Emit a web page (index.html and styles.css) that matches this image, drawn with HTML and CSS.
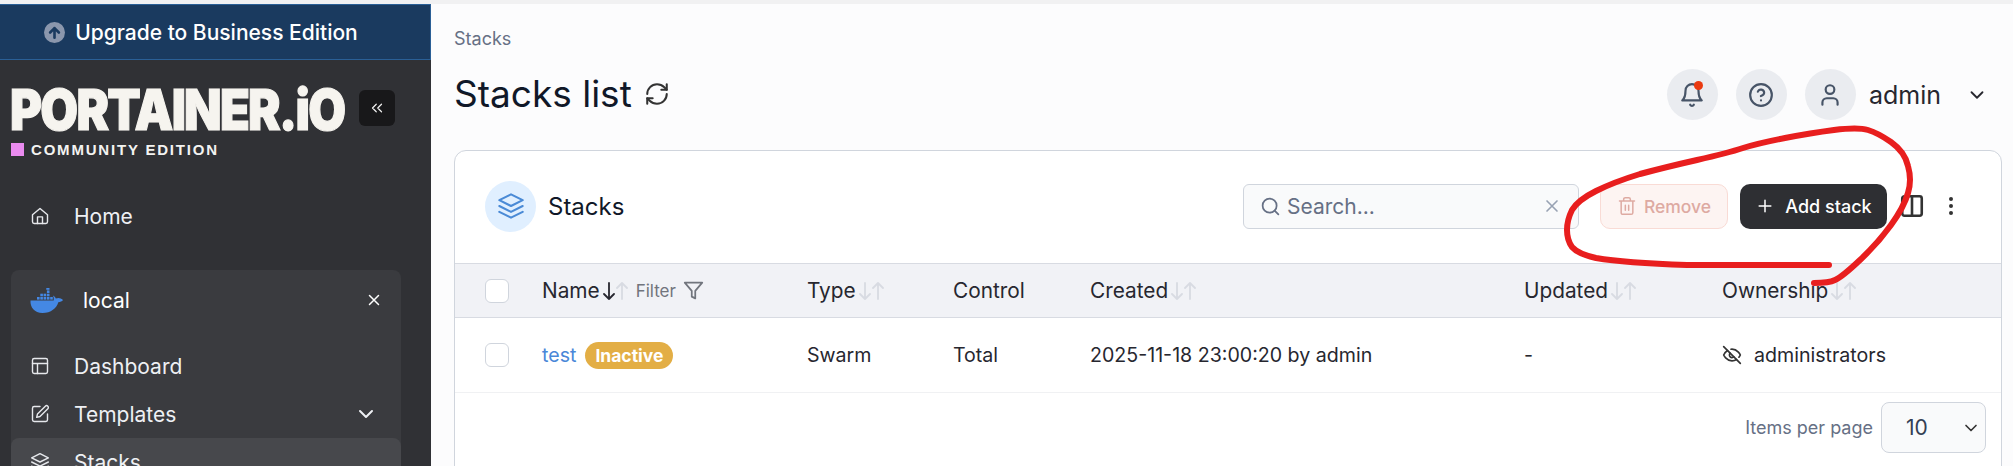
FILE: index.html
```html
<!DOCTYPE html>
<html lang="en">
<head>
<meta charset="utf-8">
<title>Stacks list</title>
<link rel="stylesheet" href="styles.css">
</head>
<body>
<div class="app">
  <aside class="sidebar">
    <a class="upgrade">
      <svg class="upgrade-icon" viewBox="0 0 24 24"><circle class="up-disc" cx="12" cy="12" r="12"/><path class="up-arrow" d="M12 18V7M7 12l5-5 5 5"/></svg>
      <span>Upgrade to Business Edition</span>
    </a>
    <div class="brand">
      <div class="brand-text">
        <div class="logo"><span class="logo-word">PORTAINER.iO</span></div>
        <div class="edition"><span class="edition-mark"></span>COMMUNITY EDITION</div>
      </div>
      <button class="collapse"><svg class="ic ic-collapse" viewBox="0 0 24 24"><path d="m11 17-5-5 5-5M18 17l-5-5 5-5"/></svg></button>
    </div>
    <nav class="nav-top">
      <a class="nav-item"><svg class="ic nav-ic" viewBox="0 0 24 24"><path d="M3 10.5 12 3l9 7.5V19a2 2 0 0 1-2 2H5a2 2 0 0 1-2-2z"/><path d="M9 21v-8h6v8"/></svg><span>Home</span></a>
    </nav>
    <section class="env">
      <div class="env-head">
        <svg class="whale" viewBox="0 0 34 25"><g class="whale-boxes"><rect x="7" y="9" width="2.6" height="2.6"/><rect x="10.3" y="9" width="2.6" height="2.6"/><rect x="13.6" y="9" width="2.6" height="2.6"/><rect x="16.9" y="9" width="2.6" height="2.6"/><rect x="20.2" y="9" width="2.6" height="2.6"/><rect x="10.3" y="5.7" width="2.6" height="2.6"/><rect x="13.6" y="5.7" width="2.6" height="2.6"/><rect x="16.9" y="5.7" width="2.6" height="2.6"/><rect x="16.9" y="2.4" width="2.6" height="2.6"/><rect x="16.3" y="0" width="3.2" height="1.8"/></g><path class="whale-body" d="M0.5 12.4h23.2c.3-2 .1-3.6-.9-5 1.5.6 2.6 1.6 3 3.2 1.5-.7 3.4-.9 5 0 .9.4 1.8.9 2.2 1.4-.9 1.4-2.8 2.2-4.7 2.2C26.600 20 21 25 12.500 25 4.500 25 0 19 .5 12.400z"/></svg>
        <span class="env-name">local</span>
        <svg class="ic env-x" viewBox="0 0 24 24"><path d="M18 6 6 18M6 6l12 12"/></svg>
      </div>
      <a class="nav-item"><svg class="ic nav-ic" viewBox="0 0 24 24"><rect x="3" y="3" width="18" height="18" rx="2"/><path d="M3 9h18M9 21V9"/></svg><span>Dashboard</span></a>
      <a class="nav-item"><svg class="ic nav-ic" viewBox="0 0 24 24"><path d="M12 3H5a2 2 0 0 0-2 2v14a2 2 0 0 0 2 2h14a2 2 0 0 0 2-2v-7"/><path d="M18.400 2.600a2.120 2.120 0 1 1 3 3L12 15l-4 1 1-4z"/></svg><span class="grow">Templates</span><svg class="ic nav-chev" viewBox="0 0 24 24"><path d="m6 9 6 6 6-6"/></svg></a>
      <a class="nav-item active"><svg class="ic nav-ic" viewBox="0 0 24 24"><path d="m12 2 10 5-10 5L2 7z"/><path d="m2 12 10 5 10-5M2 17l10 5 10-5"/></svg><span>Stacks</span></a>
    </section>
  </aside>

  <main class="main">
    <header class="topbar">
      <div class="titles">
        <div class="crumb">Stacks</div>
        <div class="title-row">
          <h1>Stacks list</h1>
          <svg class="ic refresh" viewBox="0 0 24 24"><path d="M3 12a9 9 0 0 1 9-9 9.750 9.750 0 0 1 6.740 2.740L21 8"/><path d="M21 3v5h-5"/><path d="M21 12a9 9 0 0 1-9 9 9.750 9.750 0 0 1-6.740-2.740L3 16"/><path d="M8 16H3v5"/></svg>
        </div>
      </div>
      <div class="user-area">
        <span class="disc bell-disc">
          <svg class="ic disc-ic" viewBox="0 0 24 24"><path d="M6 8a6 6 0 0 1 12 0c0 7 3 9 3 9H3s3-2 3-9"/><path d="M10.300 21a1.940 1.940 0 0 0 3.400 0"/></svg>
          <span class="dot"></span>
        </span>
        <span class="disc"><svg class="ic disc-ic" viewBox="0 0 24 24"><circle cx="12" cy="12" r="10"/><path d="M9.090 9a3 3 0 0 1 5.830 1c0 2-3 3-3 3M12 17h.01"/></svg></span>
        <span class="disc"><svg class="ic disc-ic" viewBox="0 0 24 24"><path d="M19 21v-2a4 4 0 0 0-4-4H9a4 4 0 0 0-4 4v2"/><circle cx="12" cy="7" r="4"/></svg></span>
        <span class="user-name">admin</span>
        <svg class="ic user-chev" viewBox="0 0 24 24"><path d="m6 9 6 6 6-6"/></svg>
      </div>
    </header>

    <section class="card">
      <div class="card-head">
        <span class="card-disc"><svg class="ic card-ic" viewBox="0 0 24 24"><path d="m12 2 10 5-10 5L2 7z"/><path d="m2 12 10 5 10-5M2 17l10 5 10-5"/></svg></span>
        <h2>Stacks</h2>
        <div class="search">
          <svg class="ic search-ic" viewBox="0 0 24 24"><circle cx="11" cy="11" r="8"/><path d="m21 21-4.300-4.300"/></svg>
          <input class="search-input" type="text" placeholder="Search...">
          <svg class="ic search-x" viewBox="0 0 24 24"><path d="M18 6 6 18M6 6l12 12"/></svg>
        </div>
        <button class="btn btn-remove"><svg class="ic btn-ic" viewBox="0 0 24 24"><path d="M3 6h18M19 6v14a2 2 0 0 1-2 2H7a2 2 0 0 1-2-2V6M8 6V4a2 2 0 0 1 2-2h4a2 2 0 0 1 2 2v2M10 11v6M14 11v6"/></svg>Remove</button>
        <button class="btn btn-add"><svg class="ic btn-ic" viewBox="0 0 24 24"><path d="M5 12h14M12 5v14"/></svg>Add stack</button>
        <svg class="ic cols" viewBox="0 0 24 24"><rect x="3" y="3" width="18" height="18" rx="2"/><path d="M12 3v18"/></svg>
        <svg class="kebab" viewBox="0 0 24 24"><circle cx="12" cy="5" r="2"/><circle cx="12" cy="12" r="2"/><circle cx="12" cy="19" r="2"/></svg>
      </div>

      <div class="row row-head">
        <span><input class="check" type="checkbox"></span>
        <span class="cell">Name<svg class="sort" viewBox="0 0 25 18"><path class="on" d="M6 1v16M1 12l5 5 5-5"/><path d="M19 17V1M14 6l5-5 5 5"/></svg><span class="filter">Filter</span><svg class="ic funnel" viewBox="0 0 24 24"><path d="M22 3H2l8 9.460V19l4 2v-8.540z"/></svg></span>
        <span class="cell">Type<svg class="sort" viewBox="0 0 25 18"><path d="M6 1v16M1 12l5 5 5-5"/><path d="M19 17V1M14 6l5-5 5 5"/></svg></span>
        <span class="cell">Control</span>
        <span class="cell">Created<svg class="sort" viewBox="0 0 25 18"><path d="M6 1v16M1 12l5 5 5-5"/><path d="M19 17V1M14 6l5-5 5 5"/></svg></span>
        <span class="cell">Updated<svg class="sort" viewBox="0 0 25 18"><path d="M6 1v16M1 12l5 5 5-5"/><path d="M19 17V1M14 6l5-5 5 5"/></svg></span>
        <span class="cell">Ownership<svg class="sort" viewBox="0 0 25 18"><path d="M6 1v16M1 12l5 5 5-5"/><path d="M19 17V1M14 6l5-5 5 5"/></svg></span>
      </div>

      <div class="row row-body">
        <span><input class="check" type="checkbox"></span>
        <span class="cell"><a class="link">test</a><span class="badge">Inactive</span></span>
        <span class="cell">Swarm</span>
        <span class="cell">Total</span>
        <span class="cell">2025-11-18 23:00:20 by admin</span>
        <span class="cell">-</span>
        <span class="cell"><svg class="ic eye" viewBox="0 0 24 24"><path d="M9.880 9.880a3 3 0 1 0 4.240 4.240"/><path d="M10.730 5.080A10.430 10.430 0 0 1 12 5c7 0 10 7 10 7a13.160 13.160 0 0 1-1.670 2.680"/><path d="M6.610 6.610A13.530 13.530 0 0 0 2 12s3 7 10 7a9.740 9.740 0 0 0 5.390-1.610"/><path d="m2 2 20 20"/></svg>administrators</span>
      </div>

      <div class="card-foot">
        <span class="per-page">Items per page</span>
        <div class="select"><span>10</span><svg class="ic select-chev" viewBox="0 0 24 24"><path d="m6 9 6 6 6-6"/></svg></div>
      </div>
    </section>
  </main>

  <svg class="scribble" viewBox="0 0 2013 466"><path d="M1829 265 L1687 265 Q1625 263 1596 258 Q1578 254 1572 247 Q1567 240 1567 230 Q1567 220 1572 210 Q1578 200 1596 191 Q1614 182 1640 174 Q1666 167 1697 160 Q1728 153 1743 148 Q1759 143 1785 138 Q1811 133 1834 130 Q1858 127 1868 130 Q1878 133 1891 142 Q1905 152 1908 166 Q1912 180 1908 193 Q1904 207 1891 225 Q1878 243 1860 260 Q1842 277 1835 280 Q1829 283 1814 283"/></svg>
</div>
</body>
</html>
```
FILE: styles.css
```css
* { box-sizing: border-box; }
html, body { margin: 0; height: 466px; overflow: hidden; }
body { font-family: Inter, "Liberation Sans", sans-serif; color: #27272f; background: #fcfcfd; }
h1, h2 { margin: 0; font-weight: 400; }
.app { position: relative; display: flex; height: 466px; padding-top: 4px; background: #fcfcfd; box-shadow: inset 0 4px 0 #f1f1f2; overflow: hidden; }
.ic { fill: none; stroke: currentColor; stroke-width: 2; stroke-linecap: round; stroke-linejoin: round; flex: none; }
.grow { flex: 1; }

/* sidebar */
.sidebar { width: 431px; flex: none; background: #303135; color: #fff; display: flex; flex-direction: column; }
.upgrade { height: 56px; flex: none; display: flex; align-items: center; justify-content: center; gap: 10px; background: #1a3a5f; border-top: 1px solid #2a5f96; border-bottom: 1px solid #2a5f96; border-right: 1px solid #2a5f96; font-size: 21px; font-weight: 500; color: #fff; padding-right: 28px; }
.upgrade-icon { width: 21px; height: 21px; flex: none; }
.up-disc { fill: #8b97ad; }
.up-arrow { fill: none; stroke: #1a3a5f; stroke-width: 3; stroke-linecap: round; stroke-linejoin: round; }
.brand { display: flex; align-items: flex-start; padding: 30px 0 0 10px; height: 139px; flex: none; }
.brand-text { width: 349px; flex: none; }
.logo { height: 40px; line-height: 40px; color: #f6f4ef; white-space: nowrap; }
.logo-word { display: inline-block; font-size: 56px; font-weight: 900; letter-spacing: -2px; transform: scaleX(.872); transform-origin: left center; -webkit-text-stroke: 1.2px #f6f4ef; }
.edition { display: flex; align-items: center; gap: 7px; margin-top: 13px; margin-left: 1px; font-family: "Liberation Sans", Arial, sans-serif; font-weight: 700; font-size: 15px; line-height: 13px; letter-spacing: 1.8px; color: #f3f3f1; }
.edition-mark { width: 13px; height: 13px; background: #ea8bef; flex: none; }
.collapse { width: 36px; height: 36px; flex: none; border: 0; border-radius: 6px; background: #18181a; padding: 0; display: flex; align-items: center; justify-content: center; color: #f2f2f2; }
.ic-collapse { width: 18px; height: 18px; stroke-width: 1.6; }
.nav-top { padding: 0 11px; height: 71px; flex: none; }
.nav-item { display: flex; align-items: center; height: 48px; padding: 0 19px; font-size: 21px; color: #eef0f4; }
.nav-top .nav-item { height: 34px; }
.nav-ic { width: 20px; height: 20px; margin-right: 24px; stroke-width: 1.7; color: #e6e8ec; }
.nav-chev { width: 24px; height: 24px; margin-right: 4px; }
.env { margin: 0 30px 0 11px; background: #3a3b3f; border-radius: 8px; flex: none; height: 240px; }
.env-head { display: flex; align-items: center; height: 58px; padding: 2px 19px 0 19px; margin-bottom: 14px; }
.whale { width: 34px; height: 25px; flex: none; margin-right: 19px; }
.whale-boxes, .whale-body { fill: #4488e4; }
.env-name { flex: 1; font-size: 21px; color: #fff; }
.env-x { width: 18px; height: 18px; color: #fff; stroke-width: 2; margin-right: -1px; }
.active { background: #47484c; border-radius: 8px; }

/* main */
.main { flex: 1; min-width: 0; padding: 0 12px 0 23px; }
.topbar { display: flex; justify-content: space-between; height: 146px; }
.crumb { margin-top: 25px; font-size: 18px; line-height: 20px; color: #667085; }
.title-row { display: flex; align-items: center; gap: 12px; margin-top: 22px; height: 46px; }
h1 { font-size: 37px; line-height: 46px; color: #101828; }
.refresh { width: 26px; height: 26px; color: #333; stroke-width: 1.9; }
.user-area { display: flex; align-items: center; height: 51px; margin-top: 65px; color: #344054; }
.disc { position: relative; width: 51px; height: 51px; border-radius: 50%; background: #eaecf0; display: flex; align-items: center; justify-content: center; margin-right: 18px; color: #475467; }
.disc-ic { width: 26px; height: 26px; }
.dot { position: absolute; top: 12px; left: 27px; width: 9px; height: 9px; border-radius: 50%; background: #ea3a10; }
.user-name { font-size: 25px; margin-left: -5px; margin-right: 25px; color: #27272f; }
.user-chev { width: 22px; height: 22px; color: #27272f; margin-right: 13px; }

.card { background: #fff; border: 1px solid #d0d5dd; border-radius: 12px; height: 400px; width: 1548px; }
.card-head { display: flex; align-items: center; height: 112px; padding: 0 0 2px 30px; }
.card-disc { width: 51px; height: 51px; border-radius: 50%; background: #e0efff; display: flex; align-items: center; justify-content: center; color: #4a8ad6; margin-right: 12px; flex: none; }
.card-ic { width: 28px; height: 28px; stroke-width: 1.8; }
h2 { font-size: 24px; width: 695px; flex: none; color: #101828; }
.search { display: flex; align-items: center; width: 336px; height: 45px; border: 1px solid #d0d5dd; border-radius: 6px; background: #f9fafb; padding: 0 16px 0 16px; flex: none; margin-right: 21px; }
.search-ic { width: 21px; height: 21px; color: #667085; margin-right: 6px; }
.search-input { flex: 1; min-width: 0; border: 0; background: transparent; font: 400 21px Inter, sans-serif; color: #27272f; padding: 0; outline: 0; }
.search-input::placeholder { color: #667085; opacity: 1; }
.search-x { width: 20px; height: 20px; color: #98a2b3; }
.btn { display: flex; align-items: center; justify-content: center; height: 45px; border-radius: 10px; font: 500 17.5px Inter, sans-serif; flex: none; padding: 0; }
.btn-remove { width: 128px; margin-right: 12px; background: #fdf4f2; border: 1px solid #f9dbd5; color: #deaaa2; gap: 7px; }
.btn-add { width: 147px; margin-right: 12px; background: #2e2f33; border: 0; color: #fff; gap: 10px; font-size: 18px; }
.btn-ic { width: 20px; height: 20px; stroke-width: 1.8; }
.cols { width: 26px; height: 26px; color: #333; stroke-width: 2.4; margin-right: 14px; }
.kebab { width: 24px; height: 24px; fill: #333; flex: none; }

.row { display: grid; grid-template-columns: 57px 265px 146px 137px 434px 198px 1fr; align-items: center; padding-left: 30px; font-size: 20.8px; color: #27272f; }
.row-head { height: 55px; background: #f1f2f6; border-top: 1px solid #d8dbe2; border-bottom: 1px solid #d8dbe2; }
.row-body { height: 75px; border-bottom: 1px solid #f0f1f3; font-size: 19.6px; }
.row > span:first-child { display: flex; }
.cell { display: flex; align-items: center; white-space: nowrap; }
.check { appearance: none; -webkit-appearance: none; margin: 0; width: 24px; height: 24px; border: 1px solid #d0d5dd; border-radius: 6px; background: #fff; }
.sort { width: 25px; height: 18px; margin-left: 3px; fill: none; stroke: #d8dbe2; stroke-width: 1.8; stroke-linecap: round; stroke-linejoin: round; flex: none; }
.sort .on { stroke: #27272f; }
.filter { font-size: 17px; color: #71757d; margin-left: 8px; margin-right: 7px; }
.funnel { width: 21px; height: 21px; color: #71757d; }
.link { color: #4a87d8; }
.badge { display: inline-flex; align-items: center; height: 27px; margin-left: 9px; padding: 0 10px; border-radius: 14px; background: #e3ae45; color: #fff; font-size: 17.5px; font-weight: 700; }
.eye { width: 20px; height: 20px; color: #333; margin-right: 12px; }
.card-foot { display: flex; justify-content: flex-end; align-items: center; gap: 8px; height: 84px; padding: 0 15px 15px 0; }
.per-page { font-size: 18px; color: #667085; }
.select { display: flex; align-items: center; justify-content: space-between; width: 105px; height: 51px; border: 1px solid #d0d5dd; border-radius: 8px; background: #f9fafb; padding: 0 4px 0 24px; font-size: 21px; color: #344054; }
.select-chev { width: 20px; height: 20px; color: #333; }

.scribble { position: absolute; inset: 0; width: 2013px; height: 466px; pointer-events: none; }
.scribble path { fill: none; stroke: #e81e1e; stroke-width: 6; stroke-linecap: round; stroke-linejoin: round; }
```
